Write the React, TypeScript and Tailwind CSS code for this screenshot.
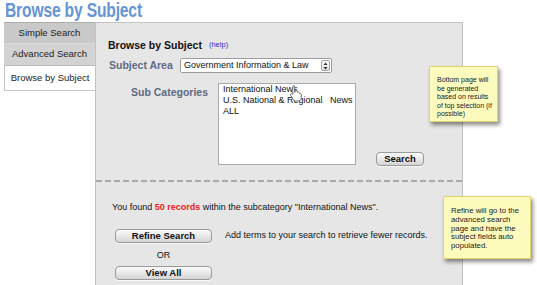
import React from 'react';

const Btn = ({ label, w }: { label: string; w: string }) => (
  <div
    className={`${w} h-[14px] flex items-center justify-center rounded-[4px] border border-[#9a9a9a] bg-[linear-gradient(#fbfbfb,#d4d4d4)] text-[9.5px] font-bold text-[#111] shadow-[0_1px_0_rgba(255,255,255,0.8)]`}
  >
    {label}
  </div>
);

const Note = ({ lines, className }: { lines: string[]; className: string }) => (
  <div
    className={`absolute bg-[#fcfbbd] border border-[#e3d46c] shadow-[2px_3px_4px_rgba(0,0,0,0.45)] text-[#222] ${className}`}
  >
    {lines.map((l) => (
      <div key={l} className="whitespace-nowrap">{l}</div>
    ))}
  </div>
);

function HandCursor() {
  return (
    <svg className="absolute left-[289px] top-[84px]" width="14" height="18" viewBox="0 0 13 17">
      <path
        d="M4 1.5c.8 0 1.3.5 1.3 1.3V8l.3-1.6c.9-.5 1.8-.3 2 .5l.2.8c.9-.4 1.7-.1 1.9.7l.1.6c.9-.3 1.7.1 1.7 1V13c0 1.6-1.3 3-3 3H6.2c-1 0-1.8-.5-2.3-1.3L1.4 10.6c-.4-.7.1-1.5.9-1.4.5 0 .9.3 1.2.7V2.8c0-.8.2-1.3.5-1.3z"
        fill="#fff"
        stroke="#666"
        strokeWidth="0.9"
      />
    </svg>
  );
}

export default function App() {
  return (
    <div className="relative w-[537px] h-[285px] overflow-hidden bg-white font-['Liberation_Sans',Arial,sans-serif] text-[#111]">
      <div className="h-[22px] pl-[5px] overflow-visible">
        <span className="inline-block origin-left scale-x-[0.78] whitespace-nowrap text-[20px] leading-[21px] font-bold tracking-[-0.2px] text-[#6595d6]">
          Browse by Subject
        </span>
      </div>

      <div className="flex">
        {/* tabs */}
        <div className="ml-[4px] w-[91px] flex flex-col text-[9.5px]">
          <div className="h-[22px] flex items-center justify-center bg-[#c9c9c9] border-t border-[#adadad] border-b border-b-[#dcdcdc] text-[#222]">
            Simple Search
          </div>
          <div className="h-[22px] flex items-center justify-center bg-[#d3d3d3] border-b border-[#bdbdbd] text-[#222]">
            Advanced Search
          </div>
          <div className="h-[25px] flex items-center justify-center bg-white border-l border-b border-[#c4c4c4] text-[#222]">
            Browse by Subject
          </div>
        </div>

        {/* main panel */}
        <div className="w-[368px] h-[263px] bg-[#e6e6e6] border-l border-t border-r border-[#c2c2c2] flex flex-col">
          <div className="pt-[15px] pl-[12px] h-[29px] flex items-center gap-[7px]">
            <span className="text-[10.5px] font-bold leading-[14px]">Browse by Subject</span>
            <span className="text-[7.5px] text-[#2d2dd0]">(help)</span>
          </div>

          <div className="mt-[6px] pl-[13px] flex items-center h-[15px]">
            <span className="w-[71px] text-[10.5px] font-bold text-[#5d6a84]">Subject Area</span>
            <div className="w-[152px] h-[15px] flex items-center justify-between bg-white border border-[#9d9d9d] rounded-[2px] pl-[3px] pr-[1px]">
              <span className="text-[9px]">Government Information &amp; Law</span>
              <div className="w-[9px] h-[11px] border border-[#a5a5a5] rounded-[2px] bg-[linear-gradient(#fff,#ddd)] flex items-center justify-center">
                <svg width="5" height="8" viewBox="0 0 5 8">
                  <path d="M2.5 0.5L4.5 3H0.5z M2.5 7.5L4.5 5H0.5z" fill="#333" />
                </svg>
              </div>
            </div>
          </div>

          <div className="mt-[10px] pl-[35px] flex">
            <span className="w-[87px] pt-[3px] text-[10.5px] font-bold text-[#5d6a84] leading-[12px]">Sub Categories</span>
            <div className="w-[138px] h-[82px] bg-white border border-[#a9a9a9] pl-[4px] text-[9px] leading-[11px]">
              <div>International News</div>
              <div className="whitespace-pre">U.S. National &amp; Regional   News</div>
              <div>ALL</div>
            </div>
            <div className="ml-[20px] self-end mb-[-1px]">
              <Btn label="Search" w="w-[48px]" />
            </div>
          </div>

          <div className="mt-[15px] h-[2px] bg-[repeating-linear-gradient(to_right,#a9a9a9_0_6px,transparent_6px_9px)]" />

          <div className="mt-[19px] pl-[16px] text-[9px] leading-[12px]">
            You found <span className="font-bold text-[#ee2222]">50 records</span> within the subcategory "International News".
          </div>

          <div className="mt-[16px] pl-[19px] flex items-center">
            <Btn label="Refine Search" w="w-[97px]" />
            <span className="ml-[13px] text-[9px]">Add terms to your search to retrieve fewer records.</span>
          </div>
          <div className="mt-[6px] pl-[19px] w-[116px] text-center text-[9px] leading-[12px]">OR</div>
          <div className="mt-[5px] pl-[19px]">
            <Btn label="View All" w="w-[97px]" />
          </div>
        </div>
      </div>

      <HandCursor />

      <Note
        className="left-[429px] top-[66px] w-[69px] h-[56px] pl-[7px] pt-[9px] text-[7px] leading-[8.6px]"
        lines={['Bottom page will', 'be generated', 'based on results', 'of top selection (if', 'possible)']}
      />
      <Note
        className="left-[443px] top-[196px] w-[88px] h-[63px] pl-[7px] pt-[10px] text-[7.8px] leading-[8.8px]"
        lines={['Refine will go to the', 'advanced search', 'page and have the', 'subject fields auto', 'populated.']}
      />
    </div>
  );
}
